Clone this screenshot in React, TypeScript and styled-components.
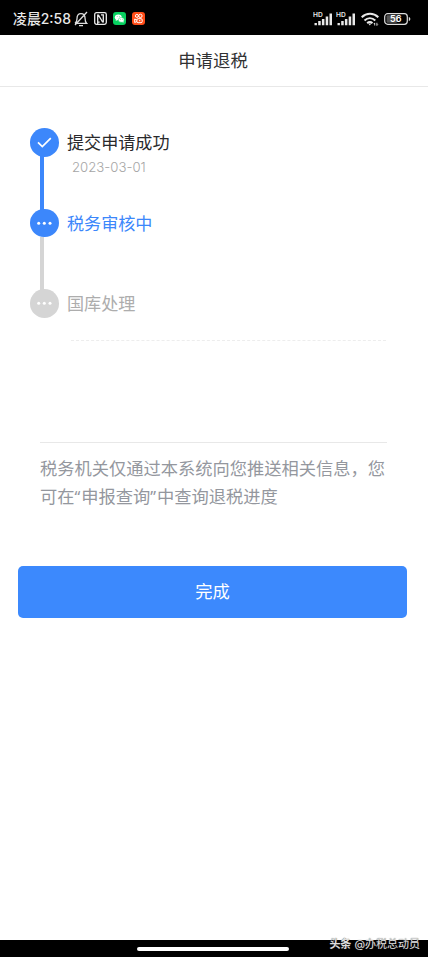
import React from 'react';
import styled, { createGlobalStyle } from 'styled-components';

const Global = createGlobalStyle`
  * { box-sizing: border-box; }
  html, body { margin: 0; background: #fff; }
  body { font-family: Inter, "Noto Sans CJK SC", sans-serif; overflow: hidden; }
`;

const Screen = styled.div`
  width: 428px;
  height: 957px;
  display: flex;
  flex-direction: column;
  background: #fff;
`;

const StatusBar = styled.header`
  height: 35px;
  flex: none;
  padding: 2px 17px 0 13px;
  display: flex;
  align-items: center;
  justify-content: space-between;
  background: #000;
  color: #e9e9e9;
`;

const StatusGroup = styled.div<{ $gap: number }>`
  display: flex;
  align-items: center;
  gap: ${p => p.$gap}px;
  svg { display: block; flex: none; }
`;

const Clock = styled.span`
  width: 58px;
  font-size: 13.9px;
  line-height: 20px;
  font-weight: 500;
  white-space: nowrap;
`;

const TitleBar = styled.div`
  height: 52px;
  flex: none;
  padding-right: 2px;
  border-bottom: 1px solid #e8e8e8;
  text-align: center;
  font-size: 17.4px;
  line-height: 51px;
  color: #303133;
`;

const Steps = styled.ol`
  margin: 41px 0 0;
  padding: 0 0 0 30px;
  list-style: none;
`;

const Step = styled.li<{ $last?: boolean }>`
  display: flex;
  height: ${p => (p.$last ? 29 : 80.7)}px;
`;

const Rail = styled.div`
  width: 29px;
  display: flex;
  flex-direction: column;
`;

const Dot = styled.div<{ $color: string }>`
  width: 29px;
  height: 28.5px;
  flex: none;
  border-radius: 50%;
  background: ${p => p.$color};
  svg { display: block; }
`;

const Connector = styled.div<{ $color: string }>`
  width: 3.6px;
  flex: 1;
  margin: -0.5px 0 -1px 10px;
  background: ${p => p.$color};
`;

const StepText = styled.div<{ $color: string }>`
  margin-left: 8px;
  padding-top: 1px;
  font-size: 17.1px;
  line-height: 28px;
  color: ${p => p.$color};
`;

const StepDate = styled.div`
  margin-left: 5px;
  font-size: 13.2px;
  line-height: 20px;
  font-weight: 300;
  color: #a6a6a6;
`;

const DashedRule = styled.div`
  margin: 22px 42px 0 71px;
  border-top: 1px dashed #ededed;
`;

const Notice = styled.p`
  width: 347px;
  margin: 101px 0 0 40px;
  padding-top: 11px;
  border-top: 1px solid #e8e8e8;
  color: #94979e;
  font-family: "Noto Sans CJK SC", sans-serif;
  font-size: 17.25px;
  line-height: 27.5px;
  white-space: nowrap;
`;

const Quote = styled.span`
  font-family: "Noto Sans", sans-serif;
  font-size: 16px;
  line-height: 1;
  letter-spacing: 1px;
`;

const DoneButton = styled.button`
  width: 389px;
  height: 52px;
  flex: none;
  margin: 56.6px 0 0 18px;
  padding: 0 0 2px;
  border: 0;
  border-radius: 5px;
  background: #3c89fd;
  color: #fff;
  font: 400 17.3px/50px "Noto Sans CJK SC", sans-serif;
`;

const NavigationBar = styled.footer`
  position: relative;
  height: 17px;
  flex: none;
  margin-top: auto;
  display: flex;
  justify-content: center;
  background: #000;
`;

const HomeIndicator = styled.div`
  width: 152px;
  height: 4px;
  margin: 7px 3px 0 0;
  border-radius: 2px;
  background: #fff;
`;

const Watermark = styled.div`
  position: absolute;
  right: 8px;
  top: -4px;
  font-size: 11px;
  line-height: 16px;
  white-space: nowrap;
  color: #dedede;
  text-shadow: 0 0 1px #444;
  b { margin-right: 3px; font-weight: 700; }
`;

const MutedBell = () => (
  <svg width="14" height="16" viewBox="0 0 14 16" fill="none" stroke="#ddd" strokeWidth="1.3">
    <path d="M1 12.4h11.7c-1.4-1.3-1.6-2.3-1.6-4.7 0-3-1.4-5-4.1-5S3 4.700 3 7.700c0 2-.2 3.400-2 4.700M5 14.600h4M13 1L1 14" />
  </svg>
);

const Nfc = () => (
  <svg width="13" height="13" viewBox="0 0 13 13" fill="none" stroke="#e9e9e9" strokeWidth="1.3">
    <rect x=".7" y=".7" width="11.600" height="11.600" rx="1.800" />
    <path d="M3.700 12V3.200h.8l4 6.600h.8V2.800H7M3.700 10.200h2" />
  </svg>
);

const WeChat = () => (
  <svg width="13" height="13" viewBox="0 0 13 13">
    <rect width="13" height="13" rx="3" fill="#07d160" />
    <ellipse cx="5.300" cy="5.300" rx="3.500" ry="2.900" fill="#fff" />
    <path d="M3 7l-.3 2L5 7.800z" fill="#fff" />
    <ellipse cx="8.300" cy="7.900" rx="2.900" ry="2.400" fill="#fff" stroke="#07d160" strokeWidth=".5" />
    <path d="M9 9.800l1.500.9-.2-1.700z" fill="#fff" />
    <g fill="#07d160"><circle cx="4.200" cy="4.600" r=".45" /><circle cx="6.500" cy="4.600" r=".45" /><circle cx="7.400" cy="7.400" r=".4" /><circle cx="9.300" cy="7.400" r=".4" /></g>
  </svg>
);

const Kuaishou = () => (
  <svg width="13" height="13" viewBox="0 0 13 13" fill="none" stroke="#fff" strokeWidth="1">
    <rect width="13" height="13" rx="3" fill="#ff4c17" stroke="none" />
    <circle cx="4.900" cy="3.900" r="1.500" /><circle cx="8.400" cy="3.900" r="1.700" />
    <rect x="4.900" y="6.700" width="5.300" height="4" rx="1.200" />
    <path d="M4.900 8L2.700 7v3.500l2.200-1M7 8.700h1.300" />
  </svg>
);

const HdSignal = () => (
  <svg width="20" height="20" viewBox="0 -3 20 20" fill="#e8e8e8">
    <path d="M1.500 11h2.400v2.200H1.500zM5.200 9h2.500v4.200H5.200zM8.900 7h2.500v6.200H8.900zM12.700 4.500h2.500v8.700h-2.500zM16.500 1.500H19v11.700h-2.500z" />
    <text x="0" y="5" fontFamily="Inter, sans-serif" fontSize="6.600" fontWeight="600">HD</text>
  </svg>
);

const Wifi = () => (
  <svg width="18" height="14" viewBox="0 0 18 14" fill="none" stroke="#e8e8e8" strokeWidth="2">
    <path d="M.7 5.300C5.500.7 12.500.7 17.300 5.300M3.500 8.500c3.200-3 7.600-3 10.800 0M6.200 11.200c1.500-1.500 3.800-1.500 5.200 0" />
    <path d="M7.300 11.500h3L8.800 13.500z" fill="#e8e8e8" stroke="none" />
    <path d="M13.700 13.500v-2.600M12.800 12l.9-1M15.900 10.800v2.600M16.800 12.500l-.9 1" strokeWidth=".9" />
  </svg>
);

const Battery = () => (
  <svg width="27" height="12" viewBox="0 0 27 12">
    <rect x="2.500" y="2.300" width="10.500" height="7.400" rx="1" fill="#555" />
    <rect x=".7" y=".7" width="22.600" height="10.600" rx="3" fill="none" stroke="#ddd" strokeWidth="1.200" />
    <path d="M24.800 4v4c1-.2 1.500-1 1.500-2s-.5-1.800-1.500-2z" fill="#ddd" />
    <text x="11.800" y="9.200" textAnchor="middle" fill="#fff" fontFamily="Inter, sans-serif" fontSize="9" fontWeight="600">56</text>
  </svg>
);

const Check = () => (
  <svg width="29" height="29" viewBox="0 0 29 29" fill="none" stroke="#fff" strokeWidth="1.700">
    <path d="M8 14.300l4.300 4.200 8.500-8.400" />
  </svg>
);

const Ellipsis = () => (
  <svg width="29" height="29" viewBox="0 0 29 29" fill="#fff">
    <circle cx="8.700" cy="14.300" r="1.500" /><circle cx="14.300" cy="14.300" r="1.500" /><circle cx="20" cy="14.300" r="1.500" />
  </svg>
);

export default function App() {
  return (
    <>
      <Global />
      <Screen>
        <StatusBar>
          <StatusGroup $gap={6}>
            <StatusGroup $gap={3}><Clock>凌晨2:58</Clock><MutedBell /></StatusGroup>
            <Nfc /><WeChat /><Kuaishou />
          </StatusGroup>
          <StatusGroup $gap={5}>
            <StatusGroup $gap={3}><HdSignal /><HdSignal /></StatusGroup>
            <Wifi /><Battery />
          </StatusGroup>
        </StatusBar>
        <TitleBar>申请退税</TitleBar>
        <Steps>
          <Step>
            <Rail><Dot $color="#3c87fb"><Check /></Dot><Connector $color="#3c87fb" /></Rail>
            <StepText $color="#29292b">提交申请成功<StepDate>2023-03-01</StepDate></StepText>
          </Step>
          <Step>
            <Rail><Dot $color="#3c87fb"><Ellipsis /></Dot><Connector $color="#d5d5d5" /></Rail>
            <StepText $color="#3c87fb">税务审核中</StepText>
          </Step>
          <Step $last>
            <Rail><Dot $color="#d5d5d5"><Ellipsis /></Dot></Rail>
            <StepText $color="#adadad">国库处理</StepText>
          </Step>
        </Steps>
        <DashedRule />
        <Notice>
          税务机关仅通过本系统向您推送相关信息，您<br />
          可在<Quote>“</Quote>申报查询<Quote>”</Quote>中查询退税进度
        </Notice>
        <DoneButton>完成</DoneButton>
        <NavigationBar>
          <HomeIndicator />
          <Watermark><b>头条</b>@办税总动员</Watermark>
        </NavigationBar>
      </Screen>
    </>
  );
}
